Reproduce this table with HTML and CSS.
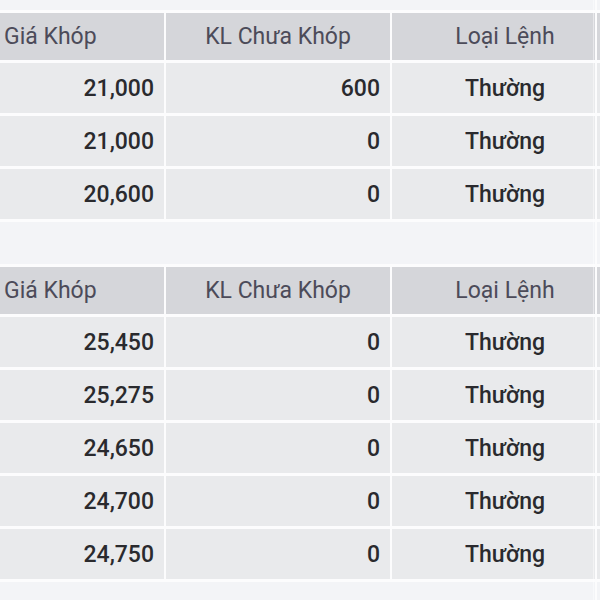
FILE: index.html
```html
<!DOCTYPE html>
<html lang="vi">
<head>
<meta charset="utf-8">
<title>Lệnh khớp</title>
<link rel="stylesheet" href="styles.css">
</head>
<body>
<div class="page">
  <table class="grid">
    <thead>
      <tr><th class="c1">Giá Khóp</th><th class="c2">KL Chưa Khóp</th><th class="c3">Loại Lệnh</th></tr>
    </thead>
    <tbody>
      <tr><td class="c1">21,000</td><td class="c2">600</td><td class="c3">Thường</td></tr>
      <tr><td class="c1">21,000</td><td class="c2">0</td><td class="c3">Thường</td></tr>
      <tr><td class="c1">20,600</td><td class="c2">0</td><td class="c3">Thường</td></tr>
    </tbody>
  </table>
  <table class="grid second">
    <thead>
      <tr><th class="c1">Giá Khóp</th><th class="c2">KL Chưa Khóp</th><th class="c3">Loại Lệnh</th></tr>
    </thead>
    <tbody>
      <tr><td class="c1">25,450</td><td class="c2">0</td><td class="c3">Thường</td></tr>
      <tr><td class="c1">25,275</td><td class="c2">0</td><td class="c3">Thường</td></tr>
      <tr><td class="c1">24,650</td><td class="c2">0</td><td class="c3">Thường</td></tr>
      <tr><td class="c1">24,700</td><td class="c2">0</td><td class="c3">Thường</td></tr>
      <tr><td class="c1">24,750</td><td class="c2">0</td><td class="c3">Thường</td></tr>
    </tbody>
  </table>
  <div class="edge"></div>
</div>
</body>
</html>
```
FILE: styles.css
```css
html, body {
  margin: 0;
  padding: 0;
  background: #f3f4f7;
}
.page {
  position: relative;
  width: 600px;
  height: 600px;
  overflow: hidden;
  padding-top: 10px;
  box-sizing: border-box;
  font-family: Roboto, "Noto Sans", sans-serif;
}
.grid {
  border-collapse: collapse;
  table-layout: fixed;
  width: 619px;
  border-top: 3px solid #fcfcfd;
}
.grid.second {
  margin-top: 42px;
}
.grid th, .grid td {
  padding: 0 10px;
  border-right: 2px solid #fcfcfd;
  border-bottom: 3px solid #fcfcfd;
  white-space: nowrap;
  box-sizing: border-box;
}
.grid th {
  height: 50px;
  background: #d5d6da;
  color: #4c4b59;
  font-size: 23px;
  font-weight: 400;
}
.grid td {
  height: 53px;
  background: #e9eaec;
  color: #2a2a2e;
  font-size: 23px;
  font-weight: 500;
}
.grid .c1 { width: 165px; text-align: right; }
.grid .c2 { width: 226px; text-align: right; }
.grid .c3 { width: 228px; text-align: center; }
.grid th.c1 { text-align: left; padding-left: 4px; }
.grid th.c2 { text-align: center; }
.edge {
  position: absolute;
  top: 0;
  bottom: 0;
  right: 3px;
  width: 4px;
  border-left: 1px solid rgba(255, 255, 255, 0.45);
  box-sizing: border-box;
}
.edge::after {
  content: "";
  position: absolute;
  top: 0;
  bottom: 0;
  right: 0;
  width: 2px;
  background: #fcfcfd;
}
```
